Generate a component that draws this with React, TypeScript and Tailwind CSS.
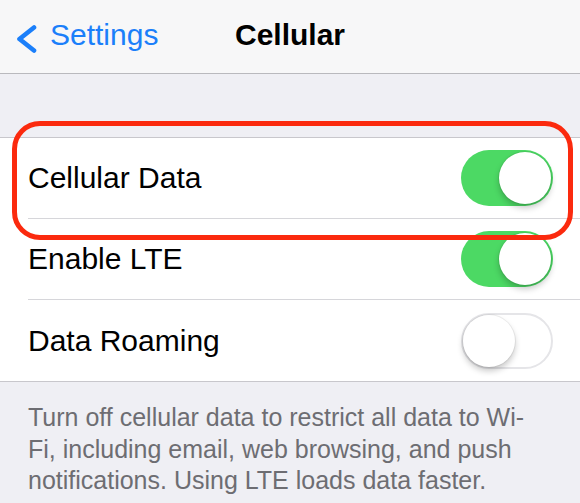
import React from "react";

/* ── iOS-style switch ─────────────────────────────────────────────── */
const Toggle = ({ on }: { on: boolean }) => (
  <div
    className={
      on
        ? "flex h-[56px] w-[92px] items-center justify-end rounded-full bg-[#4cd964] p-[2px]"
        : "flex h-[56px] w-[92px] items-center justify-start rounded-full border-2 border-[#e5e5e8] bg-white"
    }
  >
    <div className="h-[52px] w-[52px] rounded-full bg-white shadow-[0_4px_6px_rgba(0,0,0,0.22),0_0_0_1px_rgba(0,0,0,0.06)]" />
  </div>
);

const ROWS = [
  { label: "Cellular Data", on: true },
  { label: "Enable LTE", on: true },
  { label: "Data Roaming", on: false },
];

export default function App() {
  return (
    <div
      className="relative h-[503px] w-[580px] overflow-hidden bg-[#efeff4]"
      style={{ fontFamily: '"Liberation Sans", Arial, sans-serif' }}
    >
      {/* ── Nav bar ── */}
      <header className="grid h-[74px] grid-cols-[1fr_auto_1fr] items-start border-b border-[#b9b9bd] bg-[#f7f7f8] pt-[17px]">
        <div className="flex items-start pl-[15px]">
          <svg width="22" height="28" viewBox="0 0 22 28" className="mt-[8px]">
            <path
              d="M19 2.5 L4.5 14 L19 25.5"
              fill="none"
              stroke="#1b7ffa"
              strokeWidth="4.6"
              strokeLinecap="round"
              strokeLinejoin="round"
            />
          </svg>
          <span className="ml-[13px] text-[30px] leading-[36px] text-[#1b7ffa]">Settings</span>
        </div>
        <span className="text-[30px] font-bold leading-[36px] text-black">Cellular</span>
        <div />
      </header>

      {/* ── Settings group ── */}
      <div className="mt-[63px] border-y border-[#c8c7cc] bg-white">
        {ROWS.map((row, i) => (
          <div key={row.label} className="pl-[28px]">
            <div
              className={
                i < ROWS.length - 1
                  ? "flex h-[81px] items-center justify-between border-b border-[#d6d6da] pr-[27px]"
                  : "flex h-[81px] items-center justify-between pr-[27px]"
              }
            >
              <span className="text-[30px] leading-[36px] text-black">{row.label}</span>
              <Toggle on={row.on} />
            </div>
          </div>
        ))}
      </div>

      {/* ── Footer note ── */}
      <p className="pl-[28px] pr-[27px] pt-[20px] text-[25px] leading-[31.5px] text-[#6d6d72]">
        Turn off cellular data to restrict all data to Wi-
        <br />
        Fi, including email, web browsing, and push
        <br />
        notifications. Using LTE loads data faster.
      </p>

      {/* ── Red highlight annotation ── */}
      <div className="pointer-events-none absolute left-[12px] top-[121px] h-[119px] w-[561px] rounded-[28px] border-[5px] border-[#fb2a0e]" />
    </div>
  );
}
